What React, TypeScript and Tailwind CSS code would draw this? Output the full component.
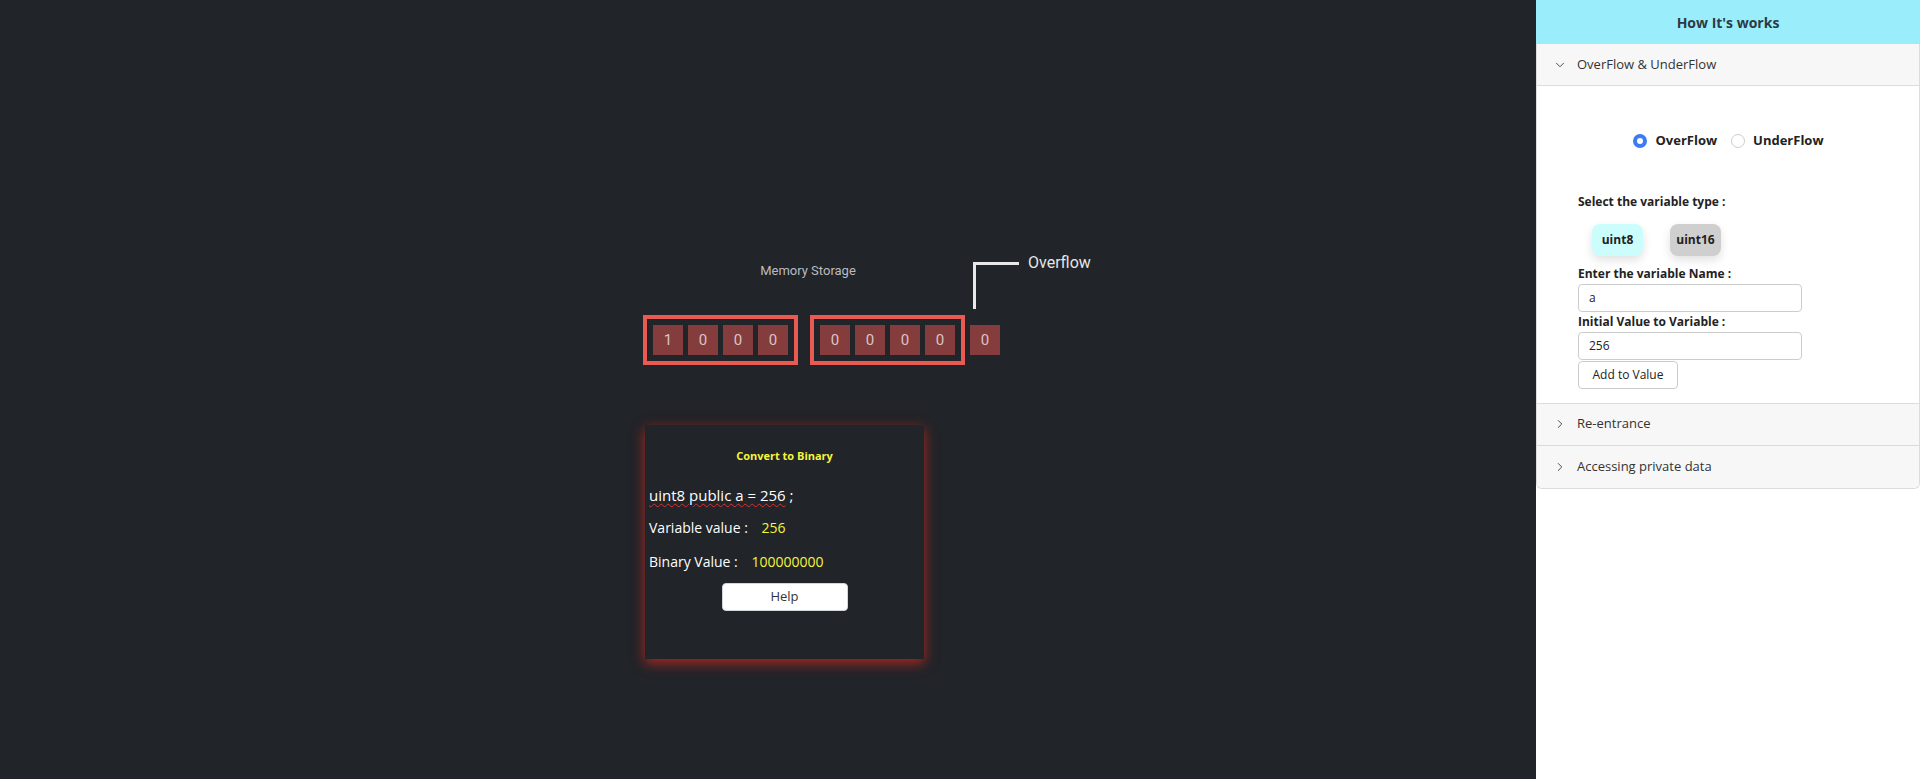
import { ChevronDown, ChevronRight } from "lucide-react";

function Cell({ v }: { v: string }) {
  return (
    <div className="flex h-[30px] w-[30px] items-center justify-center bg-[#843c3c] text-[15px] text-[#d9c6c6]">
      {v}
    </div>
  );
}

function Group({ bits }: { bits: string[] }) {
  return (
    <div className="flex gap-[5px] border-[4px] border-[#e85a52] px-[6px] py-[6px]">
      {bits.map((b, i) => (
        <Cell key={i} v={b} />
      ))}
    </div>
  );
}

function Memory() {
  return (
    <div className="ml-[643px] pt-[258px]" style={{ fontFamily: "Roboto, sans-serif" }}>
      <div className="flex">
        <div className="w-[330px] pt-[3px] text-center text-[13px] text-[#b8bcc2]">Memory Storage</div>
        <div className="flex items-start">
          <div className="mt-[4px] h-[47px] w-[46px] border-l-[3px] border-t-[3px] border-[#e8e8e8]"></div>
          <div className="ml-[9px] -mt-[7px] text-[16px] text-[#e6e6e6]">Overflow</div>
        </div>
      </div>
      <div className="mt-[6px] flex items-center gap-[12px]">
        <Group bits={["1", "0", "0", "0"]} />
        <Group bits={["0", "0", "0", "0"]} />
        <div className="-ml-[7px]">
          <Cell v="0" />
        </div>
      </div>
    </div>
  );
}

function Card() {
  return (
    <div
      className="ml-[645px] mt-[60px] h-[234px] w-[279px] bg-[#212429] px-[4px] shadow-[0_4px_12px_rgba(220,40,30,0.75)]"
      style={{ fontFamily: "'Open Sans', sans-serif" }}
    >
      <div className="pt-[23px] text-center text-[11px] font-bold text-[#f5f53a]">Convert to Binary</div>
      <div className="mt-[19px] text-[15px] text-white">
        <span className="underline decoration-wavy decoration-[#e03030] decoration-1 underline-offset-2">
          uint8 public a = 256
        </span>{" "}
        ;
      </div>
      <div className="mt-[11px] text-[14px] text-white">
        Variable value : <span className="ml-[10px] text-[#f5f53a]">256</span>
      </div>
      <div className="mt-[13px] text-[14px] text-white">
        Binary Value : <span className="ml-[10px] text-[#f5f53a]">100000000</span>
      </div>
      <div className="mt-[11px] flex justify-center">
        <button className="h-[28px] w-[126px] rounded-[4px] border border-gray-300 bg-white text-[13px] text-[#333]">
          Help
        </button>
      </div>
    </div>
  );
}

function Header({ open, label }: { open?: boolean; label: string }) {
  return (
    <div className="flex h-[42px] items-center gap-[10px] border-b border-[#dcdcdc] bg-[#f7f7f7] pl-[16px] text-[13px] text-[#333]">
      {open ? <ChevronDown size={14} strokeWidth={1.5} /> : <ChevronRight size={14} strokeWidth={1.5} />}
      <span>{label}</span>
    </div>
  );
}

function Sidebar() {
  return (
    <div className="h-[779px] w-[384px] bg-white" style={{ fontFamily: "'Open Sans', 'Noto Sans', sans-serif" }}>
      <div className="flex h-[44px] items-center justify-center bg-[#9aeefb] text-[14px] font-bold text-[#2b3a44]">
        How It's works
      </div>
      <div className="overflow-hidden rounded-b-[6px] border border-t-0 border-[#dcdcdc]">
        <Header open label="OverFlow & UnderFlow" />
        <div className="border-b border-[#dcdcdc] bg-white pb-[14px] pl-[41px] pt-[45px] text-[#222]">
          <div className="flex items-center justify-center gap-[8px] pr-[40px] text-[13px] font-bold">
            <span className="h-[14px] w-[14px] rounded-full border-[4px] border-[#3b7cf6] bg-white"></span>
            <span>OverFlow</span>
            <span className="ml-[6px] h-[14px] w-[14px] rounded-full border border-[#ccc]"></span>
            <span>UnderFlow</span>
          </div>
          <div className="mt-[42px] text-[12px] font-bold">Select the variable type :</div>
          <div className="mt-[13px] flex gap-[27px] pl-[14px]">
            <button className="h-[32px] w-[51px] rounded-[8px] bg-[#ccfdfd] text-[12px] font-bold shadow-[0_4px_10px_rgba(0,0,0,0.12)]">
              uint8
            </button>
            <button className="h-[32px] w-[51px] rounded-[8px] bg-[#cfcfcf] text-[12px] font-bold shadow-[0_4px_10px_rgba(0,0,0,0.12)]">
              uint16
            </button>
          </div>
          <div className="mt-[9px] text-[12px] font-bold">Enter the variable Name :</div>
          <div className="mt-[1px] flex h-[28px] w-[224px] items-center rounded-[4px] border border-[#ccc] pl-[10px] text-[12px]">a</div>
          <div className="mt-[1px] text-[12px] font-bold">Initial Value to Variable :</div>
          <div className="mt-[1px] flex h-[28px] w-[224px] items-center rounded-[4px] border border-[#ccc] pl-[10px] text-[12px]">256</div>
          <button className="mt-[1px] h-[28px] w-[100px] rounded-[4px] border border-[#ccc] bg-white text-[12px]">
            Add to Value
          </button>
        </div>
        <Header label="Re-entrance" />
        <div className="[&>div]:border-b-0">
          <Header label="Accessing private data" />
        </div>
      </div>
    </div>
  );
}

export default function App() {
  return (
    <div className="flex h-[779px] w-[1920px] overflow-hidden bg-[#212429]">
      <div className="w-[1536px] shrink-0">
        <Memory />
        <Card />
      </div>
      <Sidebar />
    </div>
  );
}
